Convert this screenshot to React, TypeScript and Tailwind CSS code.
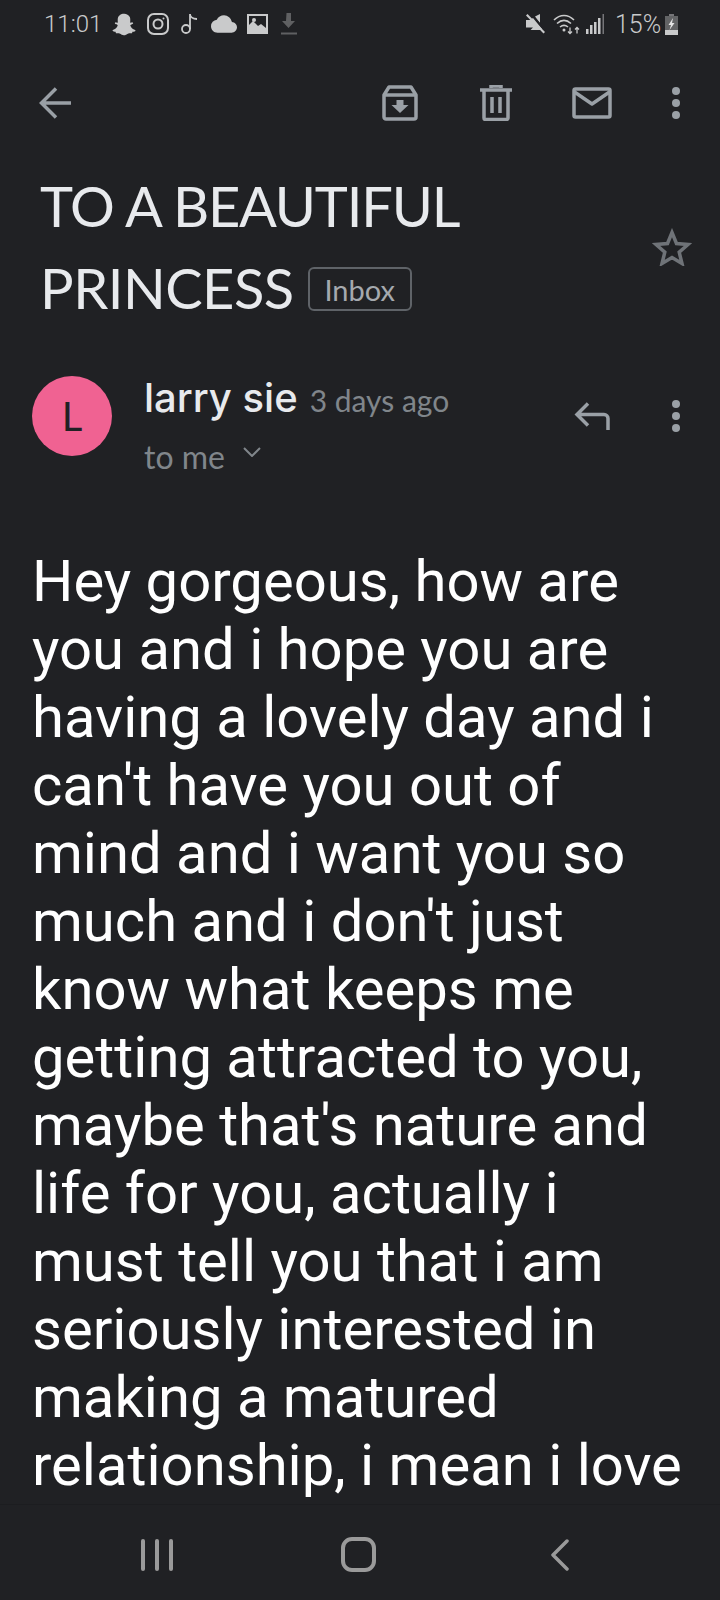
import { FaSnapchatGhost } from "react-icons/fa";
import { MdCloud } from "react-icons/md";

const bodyFont = { fontFamily: '"Roboto", "Liberation Sans", sans-serif' };

function StatusBar() {
  return (
    <div className="h-12 flex items-center justify-between pl-[44px] pr-[42px] text-[#c9cacb]">
      <div className="flex items-center">
        <span className="w-[56px] text-[24px] leading-none font-['Roboto',sans-serif] font-light">11:01</span>
        <FaSnapchatGhost className="ml-[12px] w-[24px] h-[23px]" />
        {/* instagram */}
        <svg viewBox="0 0 22 22" className="ml-[11px] w-[22px] h-[22px]" fill="none" stroke="currentColor" strokeWidth="2">
          <rect x="1" y="1" width="20" height="20" rx="6" />
          <circle cx="11" cy="11" r="4.500" />
          <circle cx="16.500" cy="5.500" r="1" fill="currentColor" stroke="none" />
        </svg>
        {/* tiktok note */}
        <svg viewBox="0 0 18 22" className="ml-[12px] w-[18px] h-[22px]" fill="none" stroke="currentColor" strokeWidth="1.800">
          <circle cx="5" cy="16" r="4" />
          <path d="M9 16V1c0 3 3 5 7 5" />
        </svg>
        <MdCloud className="ml-[12px] w-[26px] h-[26px]" />
        {/* picture */}
        <svg viewBox="0 0 21 20" className="ml-[10px] w-[21px] h-[20px]" fill="currentColor">
          <path d="M0 0h21v20H0zM2 2v9l4-4 5 5 3-2 5 4V2z" fillRule="evenodd" />
          <circle cx="7" cy="6" r="2" />
        </svg>
        {/* download */}
        <svg viewBox="0 0 18 22" className="ml-[12px] w-[18px] h-[22px] text-[#5f6062]" fill="currentColor">
          <path d="M6.500 0h4.500v8H15l-6.500 7-6.500-7h4z" />
          <rect x="1" y="19.500" width="16" height="2" />
        </svg>
      </div>
      <div className="flex items-center">
        {/* muted */}
        <svg viewBox="0 0 20 20" className="w-[20px] h-[20px]" fill="currentColor">
          <path d="M0 6h4l3-2 9 11-1 1H4.500L7 13.500H0zM9 2.500 14 0v9z" />
          <path d="M1.500 0 19 18l-1.500 1.500L0 1.500z" />
          <path d="M2 0 20 18" stroke="#202124" strokeWidth="1" transform="translate(1.500 -1)" />
        </svg>
        {/* wifi */}
        <svg viewBox="0 0 27 22" className="ml-[7px] w-[27px] h-[22px]" fill="none" stroke="currentColor" strokeWidth="1.600">
          <path d="M1 7c6-6 14-6 20 0M4 10.500c4.500-4 9.500-4 14 0M7 14c2.500-2 5.500-2 8 0" />
          <circle cx="11" cy="17" r="1.500" fill="currentColor" stroke="none" />
          <path d="M17 14.500v6m-2-2 2 2 2-2M24 20.500v-6m-2 2 2-2 2 2" strokeWidth="1.300" />
        </svg>
        {/* signal */}
        <svg viewBox="0 0 19 20" className="ml-[6px] w-[19px] h-[20px]" fill="currentColor">
          <rect x="0" y="15" width="2.500" height="5" />
          <rect x="4" y="11" width="2.500" height="9" />
          <rect x="8" y="8" width="2.500" height="12" />
          <rect x="12" y="4" width="2.500" height="16" />
          <rect x="16.500" y="0" width="1.500" height="20" opacity="0.5" />
        </svg>
        <span className="ml-[10px] w-[46px] text-[25px] leading-none font-['Roboto',sans-serif] font-light">15%</span>
        {/* battery */}
        <svg viewBox="0 0 13 21" className="ml-[4px] w-[13px] h-[21px]" fill="currentColor">
          <rect x="4" y="0" width="5" height="2" opacity="0.5" />
          <rect x="0" y="2" width="13" height="14" opacity="0.4" />
          <rect x="0" y="16" width="13" height="5" />
          <path d="M8 4 3.500 11H6l-1.500 5 5-7H7z" fill="#e4e4e4" />
        </svg>
      </div>
    </div>
  );
}

function Toolbar() {
  return (
    <div className="h-[110px] flex items-center text-[#9aa0a6]">
      <svg viewBox="0 0 32 32" className="ml-[39px] w-[32px] h-[32px]" fill="none" stroke="currentColor" strokeWidth="3.500">
        <path d="M32 16H3M17 1.500 2.500 16 17 30.500" />
      </svg>
      {/* archive */}
      <svg viewBox="0 0 36 36" className="ml-[311px] w-[36px] h-[36px]" fill="none" stroke="currentColor" strokeWidth="3.500" strokeLinejoin="round">
        <path d="M2 10 7 2h22l5 8v22a2 2 0 0 1-2 2H4a2 2 0 0 1-2-2z" />
        <path d="M2 10h32" />
        <path d="M14.500 15h7v5h5L18 28 9.500 20h5z" fill="currentColor" stroke="none" />
      </svg>
      {/* trash */}
      <svg viewBox="0 0 32 36" className="ml-[62px] w-[32px] h-[36px]" fill="none" stroke="currentColor" strokeWidth="3.500">
        <path d="M0 5h32M11 3V1h10v2" />
        <path d="M4 6v27a1.500 1.500 0 0 0 1.500 1.500h21A1.500 1.500 0 0 0 28 33V6" />
        <path d="M12 12v16M20 12v16" />
      </svg>
      {/* mail */}
      <svg viewBox="0 0 40 32" className="ml-[60px] w-[40px] h-[32px]" fill="none" stroke="currentColor" strokeWidth="3.500" strokeLinejoin="round">
        <rect x="2" y="2" width="36" height="28" rx="1.500" />
        <path d="M2.500 5 20 17 37.500 5" />
      </svg>
      <Dots className="ml-[60px]" />
    </div>
  );
}

function Dots({ className }: { className: string }) {
  return (
    <div className={`flex flex-col gap-[4px] ${className}`}>
      <div className="w-2 h-2 rounded-full bg-[#9aa0a6]" />
      <div className="w-2 h-2 rounded-full bg-[#9aa0a6]" />
      <div className="w-2 h-2 rounded-full bg-[#9aa0a6]" />
    </div>
  );
}

function Subject() {
  return (
    <div className="mt-[7px] h-[164px] flex items-center font-['Lato',sans-serif] text-[#e8eaed]">
      <h1 className="pl-[40px] w-[640px] text-[56px] leading-[82px] font-normal">
        <div className="h-[82px] tracking-[-1.200px]">TO A BEAUTIFUL</div>
        <div className="h-[82px] flex items-center tracking-[-0.500px]">
          PRINCESS
          <span className="ml-[14px] mt-[2px] inline-flex h-[44px] w-[104px] items-center justify-center rounded-[6px] border-2 border-[#5f6368] text-[29px] leading-none font-normal tracking-normal text-[#a5a9ae]">
            Inbox
          </span>
        </div>
      </h1>
      <svg viewBox="0 0 40 38" className="ml-[12px] w-[40px] h-[38px] text-[#6f7378]" fill="none" stroke="currentColor" strokeWidth="3.500">
        <path d="M20 4.500 24.500 15.500 36 16.500 27.200 24.200 30 35.500 20 29.500 10 35.500 12.800 24.200 4 16.500 15.500 15.500z" />
      </svg>
    </div>
  );
}

function Sender() {
  return (
    <div className="mt-[47px] flex font-['Lato',sans-serif]">
      <div className="ml-[32px] w-20 h-20 rounded-full bg-[#f06292] flex items-center justify-center text-[#202124] text-[40px] font-normal leading-none">
        L
      </div>
      <div className="ml-[32px] w-[430px]">
        <div className="flex items-baseline h-[44px]">
          <span className="font-['Inter',sans-serif] text-[40px] leading-[44px] font-medium text-[#e8eaed]">larry sie</span>
          <span className="ml-[12px] text-[30px] text-[#80868b]">3 days ago</span>
        </div>
        <div className="mt-[17px] flex items-center">
          <span className="text-[32px] leading-[40px] text-[#80868b]">to me</span>
          <svg viewBox="0 0 18 10" className="ml-[18px] -mt-[10px] w-[18px] h-[10px] text-[#80868b]" fill="none" stroke="currentColor" strokeWidth="2">
            <path d="M1 1l8 8 8-8" />
          </svg>
        </div>
      </div>
      <div className="h-[80px] flex items-start pt-[26px]">
        {/* reply */}
        <svg viewBox="0 0 36 28" className="w-[36px] h-[28px] text-[#9aa0a6]" fill="none" stroke="currentColor" strokeWidth="3.500">
          <path d="M14 1.500 3 12.500 14 23.500M3 12.500h27a4 4 0 0 1 4 4V28" />
        </svg>
        <Dots className="ml-[62px] -mt-[2px]" />
      </div>
    </div>
  );
}

export default function App() {
  return (
    <div className="w-[720px] h-[1600px] overflow-hidden flex flex-col bg-[#202124]">
      <StatusBar />
      <Toolbar />
      <Subject />
      <Sender />
      <div className="mt-[70px] flex-1 min-h-0 overflow-hidden">
        <p className="pl-[32px] pr-[28px] text-[58px] leading-[68px] text-white" style={bodyFont}>
          Hey gorgeous, how are you and i hope you are having a lovely day and i can't have you out of mind and i want you so
          much and i don't just know what keeps me getting attracted to you, maybe that's nature and life for you, actually i
          must tell you that i am seriously interested in making a matured relationship, i mean i love
        </p>
      </div>
      <div className="h-24 shrink-0 pt-[4px] border-t border-[#1c1d20] bg-[#202124] flex items-center text-[#9a9a9a]">
        <div className="ml-[141px] flex gap-[10px]">
          <div className="w-[4px] h-[32px] rounded-full bg-[#9a9a9a]" />
          <div className="w-[4px] h-[32px] rounded-full bg-[#9a9a9a]" />
          <div className="w-[4px] h-[32px] rounded-full bg-[#9a9a9a]" />
        </div>
        <div className="ml-[168px] w-[35px] h-[35px] rounded-[11px] border-[4px] border-[#9a9a9a]" />
        <svg viewBox="0 0 20 32" className="ml-[174px] w-[20px] h-[32px]" fill="none" stroke="currentColor" strokeWidth="3.500" strokeLinecap="round" strokeLinejoin="round">
          <path d="M17 2 3 16 17 30" />
        </svg>
      </div>
    </div>
  );
}
